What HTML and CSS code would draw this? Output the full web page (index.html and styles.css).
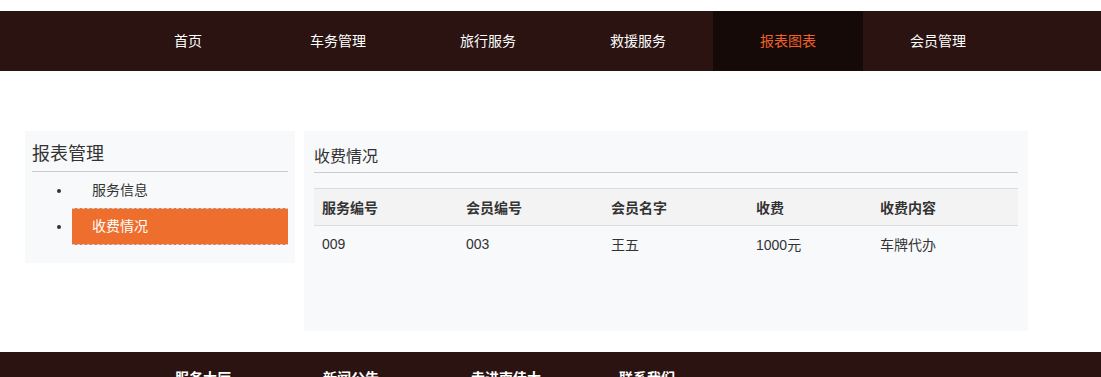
FILE: index.html
```html
<!DOCTYPE html>
<html lang="zh-CN">
<head>
  <meta charset="UTF-8">
  <title>报表图表</title>
  <link rel="stylesheet" href="styles.css">
</head>
<body>

  <nav class="topnav">
    <ul>
      <li><a href="#">首页</a></li>
      <li><a href="#">车务管理</a></li>
      <li><a href="#">旅行服务</a></li>
      <li><a href="#">救援服务</a></li>
      <li class="active"><a href="#">报表图表</a></li>
      <li><a href="#">会员管理</a></li>
    </ul>
  </nav>

  <div class="content">
    <aside class="sidebar">
      <h3>报表管理</h3>
      <ul>
        <li><a href="#">服务信息</a></li>
        <li><a href="#" class="current">收费情况</a></li>
      </ul>
    </aside>

    <section class="panel">
      <h4>收费情况</h4>
      <table class="fee-table">
        <thead>
          <tr>
            <th class="c1">服务编号</th>
            <th class="c2">会员编号</th>
            <th class="c3">会员名字</th>
            <th class="c4">收费</th>
            <th>收费内容</th>
          </tr>
        </thead>
        <tbody>
          <tr>
            <td>009</td>
            <td>003</td>
            <td>王五</td>
            <td>1000元</td>
            <td>车牌代办</td>
          </tr>
        </tbody>
      </table>
    </section>
  </div>

  <footer class="footer">
    <ul>
      <li>服务大厅</li>
      <li>新闻公告</li>
      <li>走进南佳大</li>
      <li>联系我们</li>
    </ul>
  </footer>

</body>
</html>
```

FILE: styles.css
```css
body {
  margin: 0;
  font-family: "Liberation Sans", "Noto Sans CJK SC", sans-serif;
  font-size: 14px;
  color: #333;
  background: #fff;
}

ul {
  margin: 0;
}

a {
  text-decoration: none;
}

/* top navigation */
.topnav {
  margin-top: 11px;
  height: 60px;
  background-color: #2a1311;
}

.topnav ul {
  display: flex;
  list-style: none;
  padding: 0 0 0 113px;
}

.topnav li {
  width: 150px;
  text-align: center;
  line-height: 60px;
}

.topnav a {
  display: block;
  color: #fff;
}

.topnav li.active {
  background-color: #150a08;
}

.topnav li.active a {
  color: #f0612a;
}

/* main area */
.content {
  display: flex;
  align-items: flex-start;
  gap: 9px;
  margin-top: 60px;
  padding-left: 25px;
}

.sidebar {
  width: 256px;
  padding: 7px 7px 18px;
  background-color: #f8f9fb;
}

.sidebar h3 {
  margin: 0;
  font-size: 18px;
  font-weight: normal;
  line-height: 33px;
  border-bottom: 1px solid #ccc;
}

.sidebar ul {
  padding-left: 40px;
  list-style: disc;
}

.sidebar li a {
  display: block;
  padding-left: 20px;
  line-height: 34px;
  color: #333;
  border-top: 1px dashed transparent;
  border-bottom: 1px dashed transparent;
}

.sidebar li a.current {
  line-height: 35px;
  background-color: #ee6e2d;
  color: #fff;
  border-color: #ccc;
}

.panel {
  width: 704px;
  height: 180px;
  padding: 10px;
  background-color: #f8f9fb;
}

.panel h4 {
  margin: 0;
  font-size: 16px;
  font-weight: normal;
  line-height: 31px;
  border-bottom: 1px solid #ccc;
}

.fee-table {
  width: 100%;
  margin-top: 15px;
  border-collapse: collapse;
  text-align: left;
}

.fee-table th,
.fee-table td {
  padding: 0 8px;
  height: 36px;
}

.fee-table thead tr {
  background-color: #f3f3f3;
  border-top: 1px solid #ddd;
  border-bottom: 1px solid #ddd;
}

.fee-table th {
  font-weight: bold;
}

.fee-table .c1 { width: 128px; }
.fee-table .c2 { width: 129px; }
.fee-table .c3 { width: 129px; }
.fee-table .c4 { width: 108px; }

/* footer */
.footer {
  margin-top: 21px;
  height: 120px;
  background-color: #2a1311;
}

.footer ul {
  display: flex;
  list-style: none;
  padding: 16px 0 0 175px;
}

.footer li {
  width: 148px;
  color: #fff;
  font-weight: bold;
  line-height: 20px;
}
```
